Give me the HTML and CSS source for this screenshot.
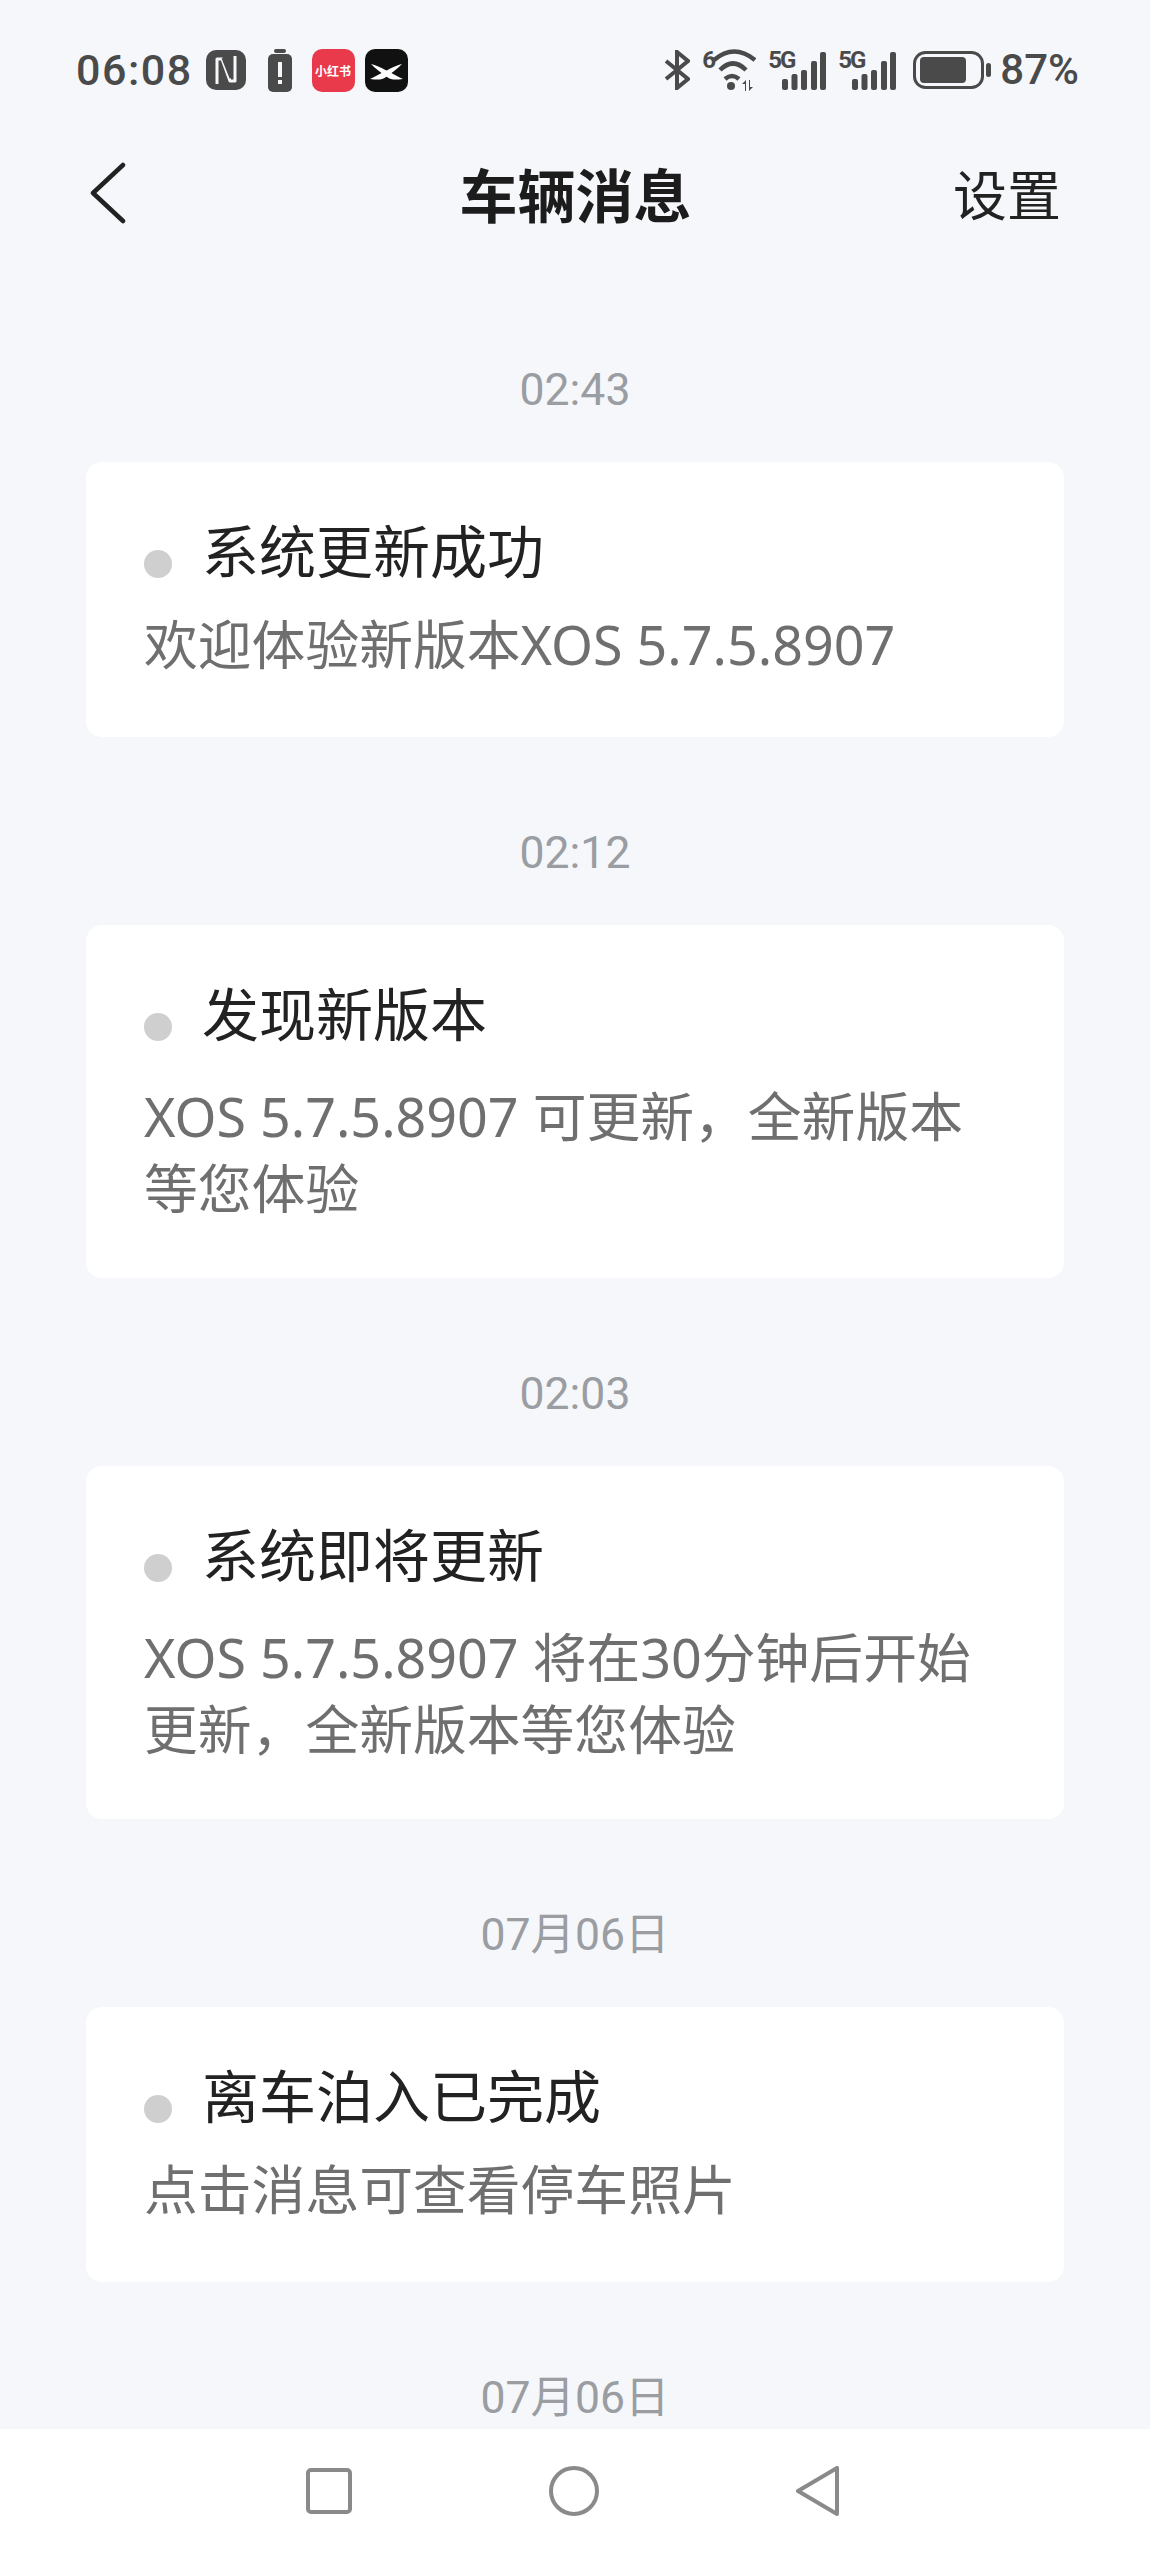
FILE: index.html
```html
<!DOCTYPE html>
<html lang="zh-CN">
<head>
	<meta charset="UTF-8">
	<title>车辆消息</title>
	<link rel="stylesheet" href="styles.css">
</head>
<body>
	<div id="phone">
		<div class="status">
			<div class="status-left">
				<span class="clock">06:08</span>
				<svg class="ico nfc" width="40" height="40" viewBox="0 0 40 40"><rect width="40" height="40" rx="10" fill="#4a4a4a"/><path d="M11 34V9h5l8 22h5V6" fill="none" stroke="#f5f7fb" stroke-width="3" stroke-linejoin="round"/><path d="M17 8l8 20" fill="none" stroke="#4a4a4a" stroke-width="3"/></svg>
				<svg class="ico alert" width="24" height="43" viewBox="0 0 24 43"><rect x="6" y="0" width="12" height="4" rx="2" fill="#4a4a4a"/><rect x="0" y="5" width="24" height="38" rx="5" fill="#4a4a4a"/><rect x="10" y="13" width="4" height="15" fill="#f5f7fb"/><rect x="10" y="31" width="4" height="4" fill="#f5f7fb"/></svg>
				<span class="app-red">小红书</span>
				<svg class="ico app-x" width="43" height="43" viewBox="0 0 43 43"><rect width="43" height="43" rx="10" fill="#111"/><path d="M6 15C15 17 27 25 38 30 30 31 26 31 22 28 16 24 10 19 6 15z" fill="#fff"/><path d="M37 15C28 17 16 25 5 30 13 31 17 31 21 28 27 24 33 19 37 15z" fill="#fff"/></svg>
			</div>
			<div class="status-right">
				<svg class="ico" width="26" height="40" viewBox="0 0 26 40"><path d="M2 11l22 18-11 9V2l11 9L2 29" fill="none" stroke="#4a4a4a" stroke-width="4"/></svg>
				<div class="net wifi">
					<span class="sup">6</span>
					<svg class="ico" width="54" height="44" viewBox="0 0 54 44"><path d="M12 12Q32-5 53 12M18 22Q31 9 44 22M23 31Q30 25 37 31" fill="none" stroke="#4a4a4a" stroke-width="4.500"/><circle cx="29" cy="38" r="4" fill="#4a4a4a"/><path d="M43 43V36h-3l4-4v11zM47 32v11l4-4h-3v-7z" fill="#4a4a4a"/></svg>
				</div>
				<div class="net sig">
					<span class="sup">5G</span>
					<svg class="ico" width="58" height="44" viewBox="0 0 58 44"><g fill="#4a4a4a"><rect x="14" y="31" width="6" height="11" rx="2"/><rect x="23.500" y="26" width="6" height="16" rx="2"/><rect x="33" y="22" width="6" height="20" rx="2"/><rect x="43" y="13" width="6" height="29" rx="2"/><rect x="52" y="4" width="6" height="38" rx="2"/></g></svg>
				</div>
				<div class="net sig">
					<span class="sup">5G</span>
					<svg class="ico" width="58" height="44" viewBox="0 0 58 44"><g fill="#4a4a4a"><rect x="14" y="31" width="6" height="11" rx="2"/><rect x="23.500" y="26" width="6" height="16" rx="2"/><rect x="33" y="22" width="6" height="20" rx="2"/><rect x="43" y="13" width="6" height="29" rx="2"/><rect x="52" y="4" width="6" height="38" rx="2"/></g></svg>
				</div>
				<svg class="ico power" width="78" height="38" viewBox="0 0 78 38"><rect x="1.500" y="1.500" width="68" height="35" rx="11" fill="none" stroke="#4a4a4a" stroke-width="3"/><rect x="7" y="6" width="46" height="26" rx="4" fill="#4a4a4a"/><rect x="73" y="12" width="5" height="14" rx="2.500" fill="#4a4a4a"/></svg>
				<span class="batt">87%</span>
			</div>
		</div>

		<div class="topbar">
			<svg class="back" width="36" height="62" viewBox="0 0 36 62"><path d="M33 3L3 31l30 28" fill="none" stroke="#222" stroke-width="4.500" stroke-linecap="round" stroke-linejoin="round"/></svg>
			<h1 class="title">车辆消息</h1>
			<span class="setting">设置</span>
		</div>

		<div class="list">
			<p class="time">02:43</p>
			<div class="card">
				<div class="card-head"><i class="dot"></i><span>系统更新成功</span></div>
				<p class="card-text">欢迎体验新版本XOS 5.7.5.8907</p>
			</div>
			<p class="time">02:12</p>
			<div class="card">
				<div class="card-head"><i class="dot"></i><span>发现新版本</span></div>
				<p class="card-text two">XOS 5.7.5.8907 可更新，全新版本等您体验</p>
			</div>
			<p class="time">02:03</p>
			<div class="card">
				<div class="card-head"><i class="dot"></i><span>系统即将更新</span></div>
				<p class="card-text two">XOS 5.7.5.8907 将在30分钟后开始更新，全新版本等您体验</p>
			</div>
			<p class="time">07月06日</p>
			<div class="card">
				<div class="card-head"><i class="dot"></i><span>离车泊入已完成</span></div>
				<p class="card-text">点击消息可查看停车照片</p>
			</div>
			<p class="time">07月06日</p>
		</div>

		<div class="navbar">
			<svg width="46" height="46" viewBox="0 0 46 46"><rect x="2" y="2" width="42" height="42" rx="3" fill="none" stroke="#8a8a8a" stroke-width="4"/></svg>
			<svg width="50" height="50" viewBox="0 0 50 50"><circle cx="25" cy="25" r="23" fill="none" stroke="#8a8a8a" stroke-width="4"/></svg>
			<svg width="43" height="50" viewBox="0 0 43 50"><path d="M41 2v46L2 25z" fill="none" stroke="#8a8a8a" stroke-width="4" stroke-linejoin="round"/></svg>
		</div>
	</div>
</body>
</html>
```

FILE: styles.css
```css
html, body{
	margin: 0;
	padding: 0;
}
body{
	background-color: #f5f7fb;
	font-family: "Noto Sans CJK SC", "Noto Sans", sans-serif;
}
#phone{
	width: 1150px;
	height: 2553px;
	overflow: hidden;
	display: flex;
	flex-direction: column;
}
/* status bar */
.status{
	height: 44px;
	margin-top: 48px;
	padding: 0 71px 0 76px;
	display: flex;
	justify-content: space-between;
	align-items: center;
	color: #4a4a4a;
}
.status-left, .status-right{
	display: flex;
	align-items: center;
}
.status-right{
	gap: 12px;
}
.ico{
	display: block;
	flex: none;
}
.clock, .batt{
	font-family: "Roboto", sans-serif;
	font-weight: 500;
	line-height: 44px;
}
.clock{
	font-size: 43px;
	letter-spacing: 1.500px;
}
.batt{
	font-size: 42px;
	margin-left: -3px;
}
.nfc{
	margin-left: 13px;
}
.alert{
	margin-left: 22px;
}
.app-red{
	width: 43px;
	height: 43px;
	margin-left: 20px;
	border-radius: 10px;
	background-color: #e83a4a;
	color: #fff;
	font-size: 12px;
	font-weight: 700;
	line-height: 43px;
	text-align: center;
	white-space: nowrap;
}
.app-x{
	margin-left: 10px;
}
.net{
	position: relative;
	flex: none;
}
.wifi{
	width: 54px;
}
.sig{
	width: 58px;
}
.sup{
	position: absolute;
	left: 0;
	top: 0;
	font-family: "Roboto", sans-serif;
	font-weight: 700;
	font-size: 24px;
	line-height: 24px;
	letter-spacing: -2px;
	color: #4a4a4a;
}
.power{
	margin-left: 5px;
}
/* title bar */
.topbar{
	height: 64px;
	margin-top: 69px;
	padding: 0 89px 0 90px;
	display: grid;
	grid-template-columns: 1fr auto 1fr;
	align-items: center;
}
.title{
	margin: 0;
	font-size: 58px;
	font-weight: 700;
	line-height: 64px;
	color: #1c1c1c;
}
.setting{
	justify-self: end;
	font-size: 54px;
	line-height: 64px;
	color: #222;
}
/* messages */
.list{
	flex: 1;
	min-height: 0;
	overflow: hidden;
	margin-top: 49px;
	padding: 0 86px;
}
.time{
	margin: 0;
	height: 188px;
	padding-top: 92px;
	box-sizing: border-box;
	text-align: center;
	font-family: "Roboto", "Noto Sans CJK SC", sans-serif;
	font-size: 44.500px;
	line-height: 48px;
	color: #9a9da1;
}
.card{
	background-color: #fff;
	border-radius: 16px;
	padding: 48px 70px 54px 58px;
}
.card-head{
	display: flex;
	align-items: center;
	font-size: 57px;
	line-height: 76px;
	color: #222;
}
.dot{
	width: 28px;
	height: 28px;
	border-radius: 50%;
	background-color: #cfcfcf;
	margin-right: 30px;
	margin-top: 32px;
}
.card-text{
	margin: 22px 0 3px;
	font-family: "Noto Sans", "Noto Sans CJK SC", sans-serif;
	font-size: 53.800px;
	line-height: 72px;
	color: #6f6f6f;
}
.card-text.two{
	margin: 31px 0 0;
}
/* system nav */
.navbar{
	height: 124px;
	padding-right: 6px;
	background-color: #fff;
	display: flex;
	align-items: center;
	justify-content: center;
	gap: 197px;
}
```
